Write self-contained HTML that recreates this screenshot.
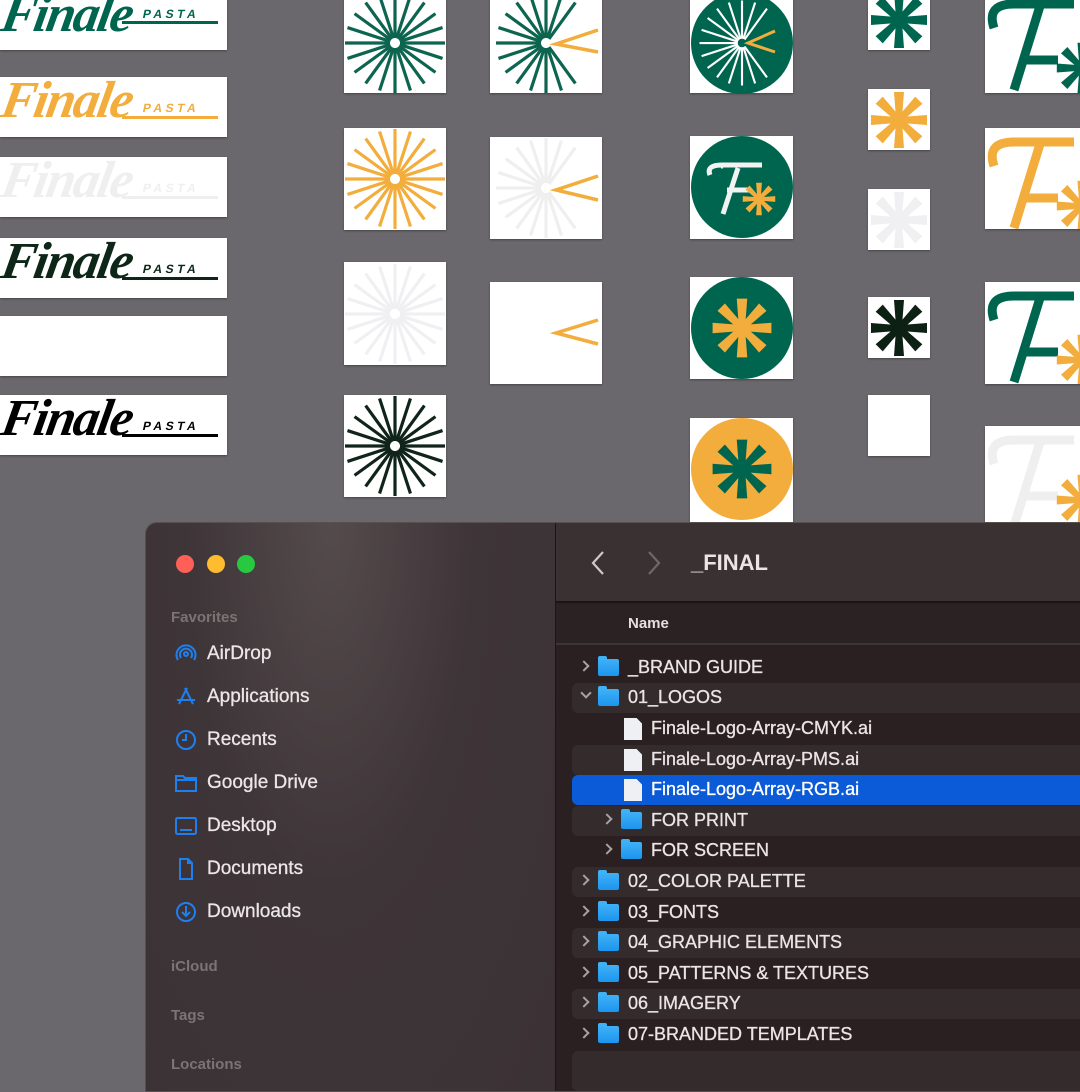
<!DOCTYPE html>
<html><head><meta charset="utf-8"><style>
*{margin:0;padding:0;box-sizing:border-box}
body{width:1080px;height:1080px;overflow:hidden;background:#6a686c;position:relative;font-family:"Liberation Sans",sans-serif}
.card{position:absolute;background:#fff;box-shadow:0 1px 2px rgba(0,0,0,.35)}
.wm{position:absolute;left:0;width:227px;height:60px;background:#fff;overflow:hidden;box-shadow:0 1px 2px rgba(0,0,0,.35)}
.wm .f{position:absolute;left:2px;top:-6px;font:italic bold 52px "Liberation Serif",serif;letter-spacing:-2px;transform:skewX(-10deg)}
.wm .p{position:absolute;left:143px;top:24px;font:900 12px "Liberation Sans",sans-serif;letter-spacing:3.5px;transform:skewX(-12deg)}
.wm .u{position:absolute;left:122px;top:39px;width:96px;height:3px}
svg.abs{position:absolute}
.win{position:absolute;left:145px;top:522px;width:940px;height:570px;border-radius:12px 0 0 0;overflow:hidden;background:#3d3437;border:1px solid #57504f}
.side{position:absolute;left:0;top:0;width:409px;height:100%;background:radial-gradient(ellipse at 45% 0%,#544b4d 0%,#3e3538 45%,#3b3235 100%)}
.dot{position:absolute;top:32px;width:18px;height:18px;border-radius:50%}
.sh{position:absolute;left:25px;font-size:15px;font-weight:bold;color:#7b7374}
.si{position:absolute;left:61px;font-size:19px;color:#ece6e7;-webkit-text-stroke:0.3px #ece6e7}
.ic{position:absolute;left:28px}
.main{position:absolute;left:409px;top:0;right:0;height:100%;background:#2a2022;border-left:1px solid #1c1516}
.tb{position:absolute;left:0;top:0;right:0;height:80px;background:#3a3133;border-bottom:2px solid #1c1516}
.hd{position:absolute;left:0;top:82px;right:0;height:40px;background:#2b2224;border-bottom:2px solid #3e3537}
.row{position:absolute;left:16px;right:0;height:30px;font-size:18px;color:#ebe5e6;border-radius:6px 0 0 6px;-webkit-text-stroke:0.3px currentColor}
.row.l{background:#342b2d}
.row.sel{background:#0b5bd8;color:#fff}
.row span{position:absolute;top:4px}
.chev{position:absolute;top:9px;width:8px;height:8px;border-right:2px solid #a9a1a2;border-bottom:2px solid #a9a1a2}
.fold{position:absolute;top:6px;width:21px;height:17px;background:linear-gradient(#3fb1f7,#1c95ee);border-radius:2px}
.fold:before{content:"";position:absolute;left:0;top:-3px;width:9px;height:4px;background:#3fb1f7;border-radius:2px 2px 0 0}
.doc{position:absolute;top:4px;width:18px;height:22px;background:#eef0f4;clip-path:polygon(0 0,70% 0,100% 25%,100% 100%,0 100%)}
</style></head><body>

<svg width="0" height="0" style="position:absolute">
<defs>
<g id="burst">
<line x1="0" y1="-5" x2="0" y2="-50"/><line x1="0" y1="-5" x2="0" y2="-50" transform="rotate(18)"/><line x1="0" y1="-5" x2="0" y2="-50" transform="rotate(36)"/><line x1="0" y1="-5" x2="0" y2="-50" transform="rotate(54)"/><line x1="0" y1="-5" x2="0" y2="-50" transform="rotate(72)"/><line x1="0" y1="-5" x2="0" y2="-50" transform="rotate(90)"/><line x1="0" y1="-5" x2="0" y2="-50" transform="rotate(108)"/><line x1="0" y1="-5" x2="0" y2="-50" transform="rotate(126)"/><line x1="0" y1="-5" x2="0" y2="-50" transform="rotate(144)"/><line x1="0" y1="-5" x2="0" y2="-50" transform="rotate(162)"/><line x1="0" y1="-5" x2="0" y2="-50" transform="rotate(180)"/><line x1="0" y1="-5" x2="0" y2="-50" transform="rotate(198)"/><line x1="0" y1="-5" x2="0" y2="-50" transform="rotate(216)"/><line x1="0" y1="-5" x2="0" y2="-50" transform="rotate(234)"/><line x1="0" y1="-5" x2="0" y2="-50" transform="rotate(252)"/><line x1="0" y1="-5" x2="0" y2="-50" transform="rotate(270)"/><line x1="0" y1="-5" x2="0" y2="-50" transform="rotate(288)"/><line x1="0" y1="-5" x2="0" y2="-50" transform="rotate(306)"/><line x1="0" y1="-5" x2="0" y2="-50" transform="rotate(324)"/><line x1="0" y1="-5" x2="0" y2="-50" transform="rotate(342)"/>
</g>
<g id="lburst">
<line x1="0" y1="-5" x2="0" y2="-50"/><line x1="0" y1="-5" x2="0" y2="-50" transform="rotate(18)"/><line x1="0" y1="-5" x2="0" y2="-50" transform="rotate(36)"/><line x1="0" y1="-5" x2="0" y2="-50" transform="rotate(144)"/><line x1="0" y1="-5" x2="0" y2="-50" transform="rotate(162)"/><line x1="0" y1="-5" x2="0" y2="-50" transform="rotate(180)"/><line x1="0" y1="-5" x2="0" y2="-50" transform="rotate(198)"/><line x1="0" y1="-5" x2="0" y2="-50" transform="rotate(216)"/><line x1="0" y1="-5" x2="0" y2="-50" transform="rotate(234)"/><line x1="0" y1="-5" x2="0" y2="-50" transform="rotate(252)"/><line x1="0" y1="-5" x2="0" y2="-50" transform="rotate(270)"/><line x1="0" y1="-5" x2="0" y2="-50" transform="rotate(288)"/><line x1="0" y1="-5" x2="0" y2="-50" transform="rotate(306)"/><line x1="0" y1="-5" x2="0" y2="-50" transform="rotate(324)"/><line x1="0" y1="-5" x2="0" y2="-50" transform="rotate(342)"/>
</g>
<g id="ast">
<path id="arm" d="M-3 -2 L3 -2 L5 -28 L-5 -28 Z"/>
<use href="#arm" transform="rotate(45)"/><use href="#arm" transform="rotate(90)"/><use href="#arm" transform="rotate(135)"/><use href="#arm" transform="rotate(180)"/><use href="#arm" transform="rotate(225)"/><use href="#arm" transform="rotate(270)"/><use href="#arm" transform="rotate(315)"/>
<circle r="6"/>
</g>
</defs></svg>

<div class="wm" style="top:-10px"><div class="f" style="color:#00654f;top:-5px">Finale</div><div class="p" style="color:#00654f;top:17px">PASTA</div><div class="u" style="background:#00654f;top:31px"></div></div>
<div class="wm" style="top:77px"><div class="f" style="color:#f2ad3c">Finale</div><div class="p" style="color:#f2ad3c">PASTA</div><div class="u" style="background:#f2ad3c"></div></div>
<div class="wm" style="top:157px"><div class="f" style="color:#efefef">Finale</div><div class="p" style="color:#efefef">PASTA</div><div class="u" style="background:#efefef"></div></div>
<div class="wm" style="top:238px"><div class="f" style="color:#0d2618">Finale</div><div class="p" style="color:#0d2618">PASTA</div><div class="u" style="background:#0d2618"></div></div>
<div class="wm" style="top:316px"></div>
<div class="wm" style="top:395px"><div class="f" style="color:#000">Finale</div><div class="p" style="color:#000">PASTA</div><div class="u" style="background:#000"></div></div>

<div class="card" style="left:344px;top:-10px;width:102px;height:103px"></div>
<div class="card" style="left:344px;top:128px;width:102px;height:102px"></div>
<div class="card" style="left:344px;top:262px;width:102px;height:103px"></div>
<div class="card" style="left:344px;top:395px;width:102px;height:102px"></div>
<div class="card" style="left:490px;top:-10px;width:112px;height:103px"></div>
<div class="card" style="left:490px;top:137px;width:112px;height:102px"></div>
<div class="card" style="left:490px;top:282px;width:112px;height:102px"></div>
<div class="card" style="left:690px;top:-10px;width:103px;height:103px"></div>
<div class="card" style="left:690px;top:136px;width:103px;height:103px"></div>
<div class="card" style="left:690px;top:277px;width:103px;height:102px"></div>
<div class="card" style="left:690px;top:418px;width:103px;height:110px"></div>
<div class="card" style="left:868px;top:-10px;width:62px;height:60px"></div>
<div class="card" style="left:868px;top:89px;width:62px;height:61px"></div>
<div class="card" style="left:868px;top:189px;width:62px;height:61px"></div>
<div class="card" style="left:868px;top:297px;width:62px;height:61px"></div>
<div class="card" style="left:868px;top:395px;width:62px;height:61px"></div>
<div class="card" style="left:985px;top:-10px;width:100px;height:103px"></div>
<div class="card" style="left:985px;top:128px;width:100px;height:101px"></div>
<div class="card" style="left:985px;top:282px;width:100px;height:102px"></div>
<div class="card" style="left:985px;top:426px;width:100px;height:100px"></div>

<svg class="abs" style="left:0;top:0" width="1080" height="530" viewBox="0 0 1080 530">
<defs><clipPath id="c6"><rect x="985" y="-10" width="100" height="103"/><rect x="985" y="128" width="100" height="101"/><rect x="985" y="282" width="100" height="102"/><rect x="985" y="426" width="100" height="100"/></clipPath></defs>
<g stroke-width="3.2">
<use href="#burst" transform="translate(395,43)" stroke="#0d6550"/>
<use href="#burst" transform="translate(395,179)" stroke="#f2ad3c"/>
<use href="#burst" transform="translate(395,314)" stroke="#f0f0f2"/>
<use href="#burst" transform="translate(395,446)" stroke="#10241a"/>
<use href="#lburst" transform="translate(546,43)" stroke="#0d6550"/>
<use href="#lburst" transform="translate(546,188)" stroke="#efefef"/>
</g>
<g fill="none" stroke="#f2ad3c" stroke-width="3.5">
<polyline points="598,30 556,44 598,52"/>
<polyline points="598,176 556,190 598,200"/>
<polyline points="598,320 556,333 598,344"/>
</g>
<circle cx="742" cy="43" r="51" fill="#00654f"/>
<g stroke="#fff" stroke-width="2.5"><use href="#lburst" transform="translate(742,43) scale(0.85)"/></g>
<polyline points="775,31 748,43 775,52" fill="none" stroke="#f2ad3c" stroke-width="3"/>
<circle cx="742" cy="187" r="51" fill="#00654f"/>
<path d="M710 175 q-4 -10 12 -10 h40 M721 166 h2 M738 168 l-15 46 M727 190 h22" stroke="#f2f2f2" stroke-width="5" fill="none"/>
<g fill="#f2ad3c"><use href="#ast" transform="translate(759,199) scale(0.58)"/></g>
<circle cx="742" cy="328" r="51" fill="#00654f"/>
<g fill="#f2ad3c"><use href="#ast" transform="translate(742,328) scale(1.05)"/></g>
<circle cx="742" cy="469" r="51" fill="#f2ad3c"/>
<g fill="#00654f"><use href="#ast" transform="translate(742,469) scale(1.05)"/></g>
<use href="#ast" transform="translate(899,20)" fill="#00654f"/>
<use href="#ast" transform="translate(899,120)" fill="#f2ad3c"/>
<use href="#ast" transform="translate(899,220)" fill="#f0f0f2"/>
<use href="#ast" transform="translate(899,328)" fill="#0d2014"/>
<g clip-path="url(#c6)" fill="none" stroke-width="9">
<g stroke="#00654f"><path d="M994 28 q-8 -24 20 -24 h60 M1040 6 l-26 84 M1020 60 h38"/></g>
<g stroke="#f2ad3c" transform="translate(0,138)"><path d="M994 28 q-8 -24 20 -24 h60 M1040 6 l-26 84 M1020 60 h38"/></g>
<g stroke="#00654f" transform="translate(0,292)"><path d="M994 28 q-8 -24 20 -24 h60 M1040 6 l-26 84 M1020 60 h38"/></g>
<g stroke="#efefef" transform="translate(0,436)"><path d="M994 28 q-8 -24 20 -24 h60 M1040 6 l-26 84 M1020 60 h38"/></g>
<use href="#ast" transform="translate(1082,68) scale(0.9)" fill="#00654f" stroke="none"/>
<use href="#ast" transform="translate(1082,206) scale(0.9)" fill="#f2ad3c" stroke="none"/>
<use href="#ast" transform="translate(1082,360) scale(0.9)" fill="#f2ad3c" stroke="none"/>
<use href="#ast" transform="translate(1082,500) scale(0.9)" fill="#f2ad3c" stroke="none"/>
</g>
</svg>

<div class="win">
 <div class="side">
  <div class="dot" style="left:30px;background:#fe5f57"></div>
  <div class="dot" style="left:61px;background:#febc2e"></div>
  <div class="dot" style="left:91px;background:#28c840"></div>
  <div class="sh" style="top:86px">Favorites</div>
  <svg class="ic" style="top:119px" width="24" height="24" viewBox="0 0 24 24" fill="none" stroke="#1e80f0" stroke-width="2"><circle cx="12" cy="12" r="2"/><path d="M7 16a6 6 0 1 1 10 0M4 18a9.5 9.5 0 1 1 16 0"/></svg>
  <div class="si" style="top:120px">AirDrop</div>
  <svg class="ic" style="top:162px" width="24" height="24" viewBox="0 0 24 24" fill="none" stroke="#1e80f0" stroke-width="2"><path d="M13 3 5 19M11 3l8 16M3 15h18"/></svg>
  <div class="si" style="top:163px">Applications</div>
  <svg class="ic" style="top:205px" width="24" height="24" viewBox="0 0 24 24" fill="none" stroke="#1e80f0" stroke-width="2"><circle cx="12" cy="12" r="9"/><path d="M12 6v6H8"/></svg>
  <div class="si" style="top:206px">Recents</div>
  <svg class="ic" style="top:248px" width="24" height="24" viewBox="0 0 24 24" fill="none" stroke="#1e80f0" stroke-width="2"><path d="M2 5h7l2 2h11v13H2zM2 9h20"/></svg>
  <div class="si" style="top:249px">Google Drive</div>
  <svg class="ic" style="top:291px" width="24" height="24" viewBox="0 0 24 24" fill="none" stroke="#1e80f0" stroke-width="2"><rect x="2" y="4" width="20" height="16" rx="1.5"/><path d="M6 16h12"/></svg>
  <div class="si" style="top:292px">Desktop</div>
  <svg class="ic" style="top:334px" width="24" height="24" viewBox="0 0 24 24" fill="none" stroke="#1e80f0" stroke-width="2"><path d="M6 2h8l4 4v16H6zM14 2v4h4"/></svg>
  <div class="si" style="top:335px">Documents</div>
  <svg class="ic" style="top:377px" width="24" height="24" viewBox="0 0 24 24" fill="none" stroke="#1e80f0" stroke-width="2"><circle cx="12" cy="12" r="9"/><path d="M12 6v10M8 12l4 4 4-4"/></svg>
  <div class="si" style="top:378px">Downloads</div>
  <div class="sh" style="top:435px">iCloud</div>
  <div class="sh" style="top:484px">Tags</div>
  <div class="sh" style="top:533px">Locations</div>
 </div>
 <div class="main">
  <div class="tb">
   <svg style="position:absolute;left:34px;top:27px" width="16" height="26" viewBox="0 0 16 26" fill="none" stroke="#cfc8c9" stroke-width="2.2"><path d="M13 2 3 13l10 11"/></svg>
   <svg style="position:absolute;left:90px;top:27px" width="16" height="26" viewBox="0 0 16 26" fill="none" stroke="#6f6768" stroke-width="2.2"><path d="M3 2l10 11L3 24"/></svg>
   <div style="position:absolute;left:135px;top:27px;font-size:22px;font-weight:bold;color:#ebe5e6">_FINAL</div>
  </div>
  <div class="hd"><div style="position:absolute;left:72px;top:10px;font-size:15px;font-weight:bold;color:#e5dfe0">Name</div></div>

  <div class="row" style="top:130px"><div class="chev" style="left:8px;transform:rotate(-45deg)"></div><div class="fold" style="left:26px"></div><span style="left:56px">_BRAND GUIDE</span></div>
  <div class="row l" style="top:160px"><div class="chev" style="left:10px;top:6px;transform:rotate(45deg)"></div><div class="fold" style="left:26px"></div><span style="left:56px">01_LOGOS</span></div>
  <div class="row" style="top:191px"><div class="doc" style="left:52px"></div><span style="left:79px">Finale-Logo-Array-CMYK.ai</span></div>
  <div class="row l" style="top:222px"><div class="doc" style="left:52px"></div><span style="left:79px">Finale-Logo-Array-PMS.ai</span></div>
  <div class="row sel" style="top:252px"><div class="doc" style="left:52px"></div><span style="left:79px">Finale-Logo-Array-RGB.ai</span></div>
  <div class="row l" style="top:283px"><div class="chev" style="left:31px;transform:rotate(-45deg)"></div><div class="fold" style="left:49px"></div><span style="left:79px">FOR PRINT</span></div>
  <div class="row" style="top:313px"><div class="chev" style="left:31px;transform:rotate(-45deg)"></div><div class="fold" style="left:49px"></div><span style="left:79px">FOR SCREEN</span></div>
  <div class="row l" style="top:344px"><div class="chev" style="left:8px;transform:rotate(-45deg)"></div><div class="fold" style="left:26px"></div><span style="left:56px">02_COLOR PALETTE</span></div>
  <div class="row" style="top:375px"><div class="chev" style="left:8px;transform:rotate(-45deg)"></div><div class="fold" style="left:26px"></div><span style="left:56px">03_FONTS</span></div>
  <div class="row l" style="top:405px"><div class="chev" style="left:8px;transform:rotate(-45deg)"></div><div class="fold" style="left:26px"></div><span style="left:56px">04_GRAPHIC ELEMENTS</span></div>
  <div class="row" style="top:436px"><div class="chev" style="left:8px;transform:rotate(-45deg)"></div><div class="fold" style="left:26px"></div><span style="left:56px">05_PATTERNS &amp; TEXTURES</span></div>
  <div class="row l" style="top:466px"><div class="chev" style="left:8px;transform:rotate(-45deg)"></div><div class="fold" style="left:26px"></div><span style="left:56px">06_IMAGERY</span></div>
  <div class="row" style="top:497px"><div class="chev" style="left:8px;transform:rotate(-45deg)"></div><div class="fold" style="left:26px"></div><span style="left:56px">07-BRANDED TEMPLATES</span></div>
  <div class="row l" style="top:528px;height:40px"></div>
 </div>
</div>
</body></html>
